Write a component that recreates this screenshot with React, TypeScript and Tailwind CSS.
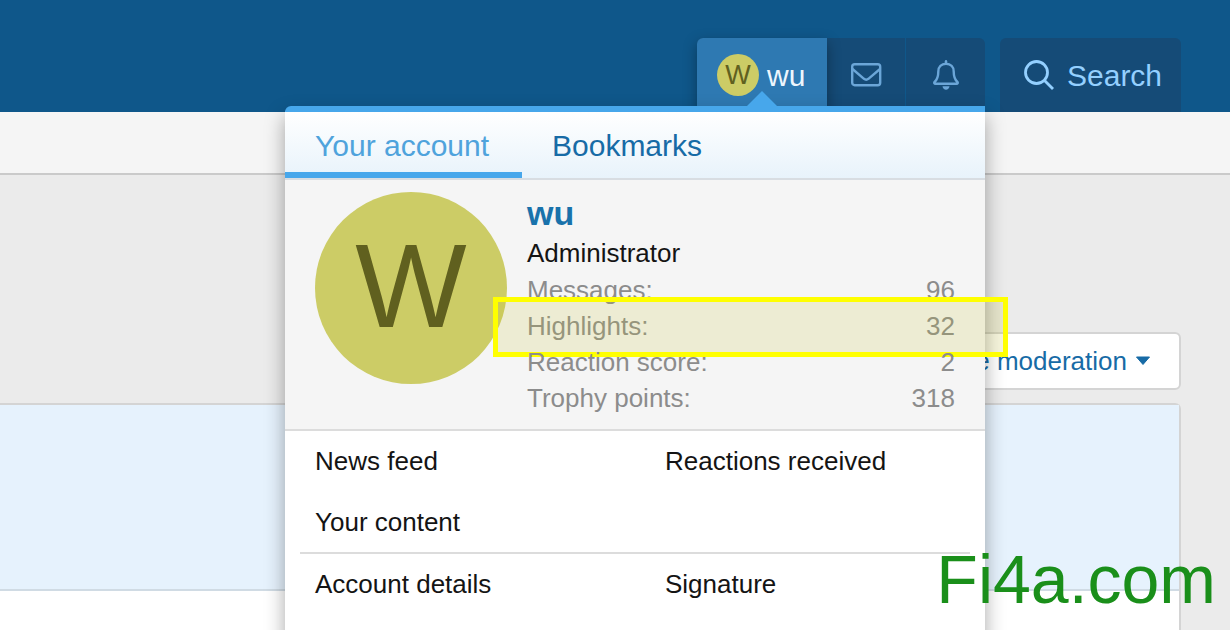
import React from 'react';

const stats = [
  { label: 'Messages:', value: '96' },
  { label: 'Highlights:', value: '32', marked: true },
  { label: 'Reaction score:', value: '2' },
  { label: 'Trophy points:', value: '318' },
];

const feedLinks = ['News feed', 'Reactions received', 'Your content'];
const accountLinks = ['Account details', 'Signature'];

const MailIcon = () => (
  <svg width="32" height="24" viewBox="0 0 32 24" fill="none" stroke="currentColor" strokeWidth="2.400" strokeLinejoin="round">
    <rect x="2.200" y="1.200" width="28" height="21" rx="2.500" />
    <path d="M2.500 6L14 15.800q2.200 1.700 4.400 0L30 6" />
  </svg>
);

const BellIcon = () => (
  <svg width="26" height="30" viewBox="0 0 26 30" fill="none" stroke="currentColor" strokeWidth="2.400" strokeLinecap="round" strokeLinejoin="round">
    <path d="M13 1.200v2.500" />
    <path d="M13 3.700c-4.600 0-7.700 3.200-7.700 7.700 0 6.600-1.500 8.400-3.600 10.500-.9 1-.3 1.900.7 1.900h21.200c1 0 1.600-.9.700-1.900-2.100-2.100-3.600-3.900-3.600-10.500 0-4.500-3.100-7.700-7.700-7.700z" />
    <path d="M9.500 26.200h7c-.3 2.100-1.700 3.600-3.500 3.600s-3.200-1.500-3.500-3.600z" fill="currentColor" stroke="none" />
  </svg>
);

const SearchIcon = () => (
  <svg width="32" height="32" viewBox="0 0 32 32" fill="none" stroke="currentColor" strokeWidth="2.800">
    <circle cx="13.500" cy="13.500" r="11" />
    <path d="M21.500 21.500l8.500 8.500" />
  </svg>
);

const AccountMenu = () => (
  <div className="absolute right-0 top-[68px] z-10 w-[700px] rounded-tl-md border-t-[6px] border-[#47a7eb] bg-white pb-16 shadow-[0_10px_20px_rgba(0,0,0,0.35)]">
    {/* Pointer to the open tab */}
    <svg className="absolute -top-[21px] left-[461px]" width="32" height="16" viewBox="0 0 32 16">
      <path d="M0 16L16 0l16 16z" fill="#47a7eb" />
    </svg>

    <div className="flex border-b-2 border-[#d8dde2] bg-gradient-to-b from-white to-[#e8f3fb] text-[30px] leading-[52px]">
      <button type="button" className="min-w-[237px] border-b-[6px] border-[#47a7eb] px-[30px] pt-2 text-left text-[#4fa3dc]">Your account</button>
      <button type="button" className="border-b-[6px] border-transparent px-[30px] pt-2 text-[#176ba6]">Bookmarks</button>
    </div>

    <div className="flex gap-5 border-b-2 border-[#dcdcdc] bg-[#f5f5f5] px-[30px] pb-[13px] pt-3">
      <span className="flex h-48 w-48 shrink-0 items-center justify-center rounded-full bg-[#cccc66] pb-1 text-[118px] leading-none text-[#60601f]">W</span>
      <div className="flex-1">
        <h3 className="text-[34px] font-bold leading-[42px] text-[#1972ab]">wu</h3>
        <div className="leading-[38px]">Administrator</div>
        <dl className="leading-[36px] text-[#8c8c8c]">
          {stats.map(stat => (
            <div key={stat.label} className="relative flex justify-between">
              <dt>{stat.label}</dt>
              <dd>{stat.value}</dd>
              {stat.marked && (
                <span className="absolute -left-[34px] -right-[53px] -top-[11px] h-[60px] border-[5px] border-[#ffff00] bg-[#c8c332]/[.17]" />
              )}
            </div>
          ))}
        </dl>
      </div>
    </div>

    <nav className="leading-[61px]">
      <div className="grid grid-cols-2">
        {feedLinks.map(link => (
          <a key={link} href="#" className="px-[30px]">{link}</a>
        ))}
      </div>
      <hr className="mx-[15px] -mt-px border-t-2 border-[#dcdcdc]" />
      <div className="grid grid-cols-2">
        {accountLinks.map(link => (
          <a key={link} href="#" className="px-[30px]">{link}</a>
        ))}
      </div>
    </nav>
  </div>
);

export default function App() {
  return (
    <div className="relative flex h-screen flex-col overflow-hidden bg-[#ebebeb] font-['Liberation_Sans',Arial,sans-serif] text-[26px] text-[#141414]">
      {/* Header */}
      <header className="flex justify-end gap-[15px] bg-[#0f578a] pr-[49px] pt-[38px]">
        <div className="relative flex h-[74px] rounded-t-md bg-[#154b77]">
          <button type="button" className="flex w-[130px] items-center gap-2 rounded-tl-md bg-[#2e79b2] pl-5 text-[30px] text-[#edf6fd] shadow-[0_5px_14px_rgba(0,0,0,0.35)]">
            <span className="flex size-[42px] items-center justify-center rounded-full bg-[#cccc66] text-[27px] leading-none text-[#60601f]">W</span>
            wu
          </button>
          <button type="button" aria-label="Conversations" className="flex w-[79px] items-center justify-center border-r border-[#0f578a] text-[#6ba6d8]">
            <MailIcon />
          </button>
          <button type="button" aria-label="Alerts" className="flex w-[79px] items-center justify-center text-[#6ba6d8]">
            <BellIcon />
          </button>
          <AccountMenu />
        </div>
        <button type="button" className="flex h-[74px] w-[181px] items-center gap-3 rounded-t-md bg-[#154b77] pl-[23px] text-[30px] text-[#94d0ff]">
          <SearchIcon />
          Search
        </button>
      </header>

      <div className="h-[63px] shrink-0 border-b-2 border-[#cacaca] bg-[#f5f5f5]" />

      {/* Thread list */}
      <main className="mr-[49px] flex flex-1 flex-col pt-[157px]">
        <button type="button" className="flex h-[58px] items-center gap-2 self-end rounded-md border-2 border-[#d4d4d4] bg-white pl-6 pr-7 text-[#176ba6]">
          Inline moderation
          <svg width="16" height="10" viewBox="0 0 16 10">
            <path d="M1.500 1h13L8 8.500z" fill="currentColor" stroke="currentColor" strokeLinejoin="round" />
          </svg>
        </button>
        <div className="mt-[13px] flex flex-1 flex-col rounded-tr-md border-r-2 border-t-2 border-[#d4d4d4] bg-white">
          <div className="h-[186px] border-b-2 border-[#d0dbe4] bg-[#e6f2fd]" />
        </div>
      </main>

      {/* Watermark */}
      <div className="pointer-events-none absolute bottom-0 right-3.5 z-20 text-[68px] leading-[102px] text-[#1a8f1a]">Fi4a.com</div>
    </div>
  );
}
